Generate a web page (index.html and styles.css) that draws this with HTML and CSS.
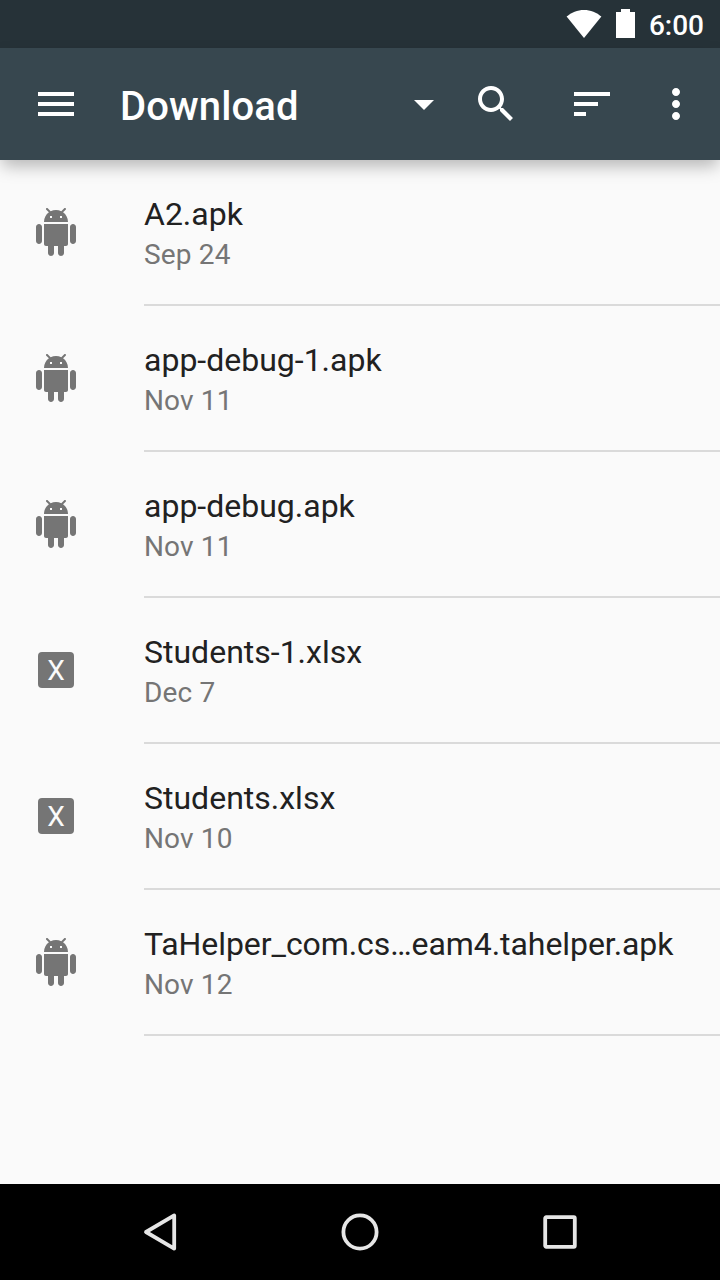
FILE: index.html
```html
<!DOCTYPE html>
<html lang="en">
<head>
<meta charset="utf-8">
<title>Download</title>
<link rel="stylesheet" href="styles.css">
</head>
<body>
<svg class="symbols" aria-hidden="true">
  <symbol id="android" viewBox="0 0 24 24"><path d="M6 18c0 .55.45 1 1 1h1v3.5c0 .83.67 1.5 1.5 1.5s1.5-.67 1.5-1.5V19h2v3.5c0 .83.67 1.5 1.5 1.5s1.5-.67 1.5-1.5V19h1c.55 0 1-.45 1-1V8H6v10zM3.5 8C2.67 8 2 8.67 2 9.5v7c0 .83.67 1.5 1.5 1.5S5 17.33 5 16.5v-7C5 8.67 4.33 8 3.5 8zm17 0c-.83 0-1.5.67-1.5 1.5v7c0 .83.67 1.5 1.5 1.5s1.5-.67 1.5-1.5v-7c0-.83-.67-1.5-1.5-1.5zm-4.97-5.84l1.3-1.3c.2-.2.2-.51 0-.71-.2-.2-.51-.2-.71 0l-1.48 1.48C13.85 1.23 12.95 1 12 1c-.96 0-1.86.23-2.66.63L7.85.15c-.2-.2-.51-.2-.71 0-.2.2-.2.51 0 .71l1.31 1.31C6.97 3.26 6 5.01 6 7h12c0-1.99-.97-3.75-2.47-4.84zM10 5H9V4h1v1zm5 0h-1V4h1v1z"/></symbol>
</svg>
<div class="screen">
  <div class="status-bar">
    <svg class="wifi" viewBox="0 0 36 28"><path d="M18 28 .6 6.6C5.4 2.500 11.400 0 18 0s12.600 2.500 17.400 6.600z"/></svg>
    <svg class="battery" viewBox="0 0 19 29"><path d="M5 0h9v3h5v26H0V3h5z"/></svg>
    <span class="clock">6:00</span>
  </div>
  <header class="toolbar">
    <svg class="icon" viewBox="0 0 24 24"><path d="M3 18h18v-2H3v2zm0-5h18v-2H3v2zm0-7v2h18V6H3z"/></svg>
    <h1 class="title">Download</h1>
    <svg class="icon" viewBox="0 0 24 24"><path d="M7 10l5 5 5-5z"/></svg>
    <svg class="icon icon-search" viewBox="0 0 24 24"><path d="M15.500 14h-.79l-.28-.27C15.410 12.590 16 11.110 16 9.500 16 5.910 13.090 3 9.500 3S3 5.910 3 9.500 5.910 16 9.500 16c1.610 0 3.090-.59 4.230-1.570l.27.28v.79l5 4.990L20.490 19l-4.990-5zm-6 0C7.010 14 5 11.990 5 9.500S7.010 5 9.500 5 14 7.010 14 9.500 11.990 14 9.500 14z"/></svg>
    <svg class="icon icon-sort" viewBox="0 0 24 24"><path d="M3 18h6v-2H3v2zM3 6v2h18V6H3zm0 7h12v-2H3v2z"/></svg>
    <svg class="icon icon-more" viewBox="0 0 24 24"><path d="M12 8c1.100 0 2-.9 2-2s-.9-2-2-2-2 .9-2 2 .9 2 2 2zm0 2c-1.100 0-2 .9-2 2s.9 2 2 2 2-.9 2-2-.9-2-2-2zm0 6c-1.100 0-2 .9-2 2s.9 2 2 2 2-.9 2-2-.9-2-2-2z"/></svg>
  </header>
  <main class="files">
    <div class="file"><div class="thumb"><svg class="android"><use href="#android"/></svg></div><div class="info"><div class="name">A2.apk</div><div class="date">Sep 24</div></div></div>
    <div class="file"><div class="thumb"><svg class="android"><use href="#android"/></svg></div><div class="info"><div class="name">app-debug-1.apk</div><div class="date">Nov 11</div></div></div>
    <div class="file"><div class="thumb"><svg class="android"><use href="#android"/></svg></div><div class="info"><div class="name">app-debug.apk</div><div class="date">Nov 11</div></div></div>
    <div class="file"><div class="thumb"><span class="sheet">X</span></div><div class="info"><div class="name">Students-1.xlsx</div><div class="date">Dec 7</div></div></div>
    <div class="file"><div class="thumb"><span class="sheet">X</span></div><div class="info"><div class="name">Students.xlsx</div><div class="date">Nov 10</div></div></div>
    <div class="file"><div class="thumb"><svg class="android"><use href="#android"/></svg></div><div class="info"><div class="name name-long">TaHelper_com.cs…eam4.tahelper.apk</div><div class="date">Nov 12</div></div></div>
  </main>
  <nav class="nav-bar">
    <svg class="nav-icon" viewBox="0 0 48 48"><path d="M10 24 38.200 7.400v33.200z"/></svg>
    <svg class="nav-icon" viewBox="0 0 48 48"><circle cx="24" cy="24" r="16.600"/></svg>
    <svg class="nav-icon" viewBox="0 0 48 48"><rect x="9.200" y="9.200" width="29.600" height="29.600" rx="1"/></svg>
  </nav>
</div>
</body>
</html>
```

FILE: styles.css
```css
body {
  margin: 0;
  font-family: Roboto, sans-serif;
}

.symbols {
  display: none;
}

.screen {
  display: flex;
  flex-direction: column;
  width: 720px;
  height: 1280px;
  overflow: hidden;
  background: #fafafa;
}

.status-bar {
  display: flex;
  align-items: flex-start;
  box-sizing: border-box;
  height: 48px;
  padding: 9px 16px 0 0;
  justify-content: flex-end;
  background: #263238;
  color: #fff;
  fill: #fff;
}

.wifi {
  width: 36px;
  height: 28px;
  margin: 1px 14px 0 0;
}

.battery {
  width: 19px;
  height: 29px;
  margin-right: 14px;
}

.clock {
  font-size: 28px;
  font-weight: 500;
  line-height: 34px;
}

.toolbar {
  display: flex;
  align-items: center;
  box-sizing: border-box;
  height: 112px;
  padding: 0 20px 0 32px;
  background: #37474f;
  color: #fff;
  fill: #fff;
  box-shadow: 0 8px 16px -2px rgba(0, 0, 0, 0.28);
}

.icon {
  flex: none;
  width: 48px;
  height: 48px;
}

.icon-search {
  margin-left: 24px;
}

.icon-sort {
  margin-left: 48px;
}

.icon-more {
  margin-left: 36px;
}

.title {
  flex: 1;
  margin: 5px 0 0 40px;
  font-size: 40px;
  font-weight: 500;
  line-height: 48px;
  letter-spacing: 0.1px;
}

.files {
  flex: 1;
}

.file {
  display: flex;
  height: 146px;
}

.thumb {
  display: flex;
  flex: none;
  align-items: center;
  justify-content: center;
  width: 112px;
  height: 144px;
  margin-right: 32px;
}

.android {
  width: 48px;
  height: 48px;
  fill: #757575;
}

.sheet {
  width: 36px;
  height: 36px;
  border-radius: 4px;
  background: #757575;
  color: #fafafa;
  font-size: 28px;
  line-height: 37px;
  text-align: center;
}

.info {
  flex: 1;
  box-sizing: border-box;
  padding-top: 34px;
  border-bottom: 2px solid #dadada;
}

.name {
  color: #212121;
  font-size: 32px;
  line-height: 40px;
  white-space: nowrap;
}

.name-long {
  letter-spacing: -0.07px;
}

.date {
  color: #757575;
  font-size: 28px;
  line-height: 42px;
  letter-spacing: 0.15px;
}

.nav-bar {
  display: flex;
  align-items: center;
  justify-content: center;
  gap: 152px;
  height: 96px;
  background: #000;
}

.nav-icon {
  width: 48px;
  height: 48px;
  fill: none;
  stroke: #e6e6e6;
  stroke-width: 3.8;
  stroke-linejoin: round;
}
```
